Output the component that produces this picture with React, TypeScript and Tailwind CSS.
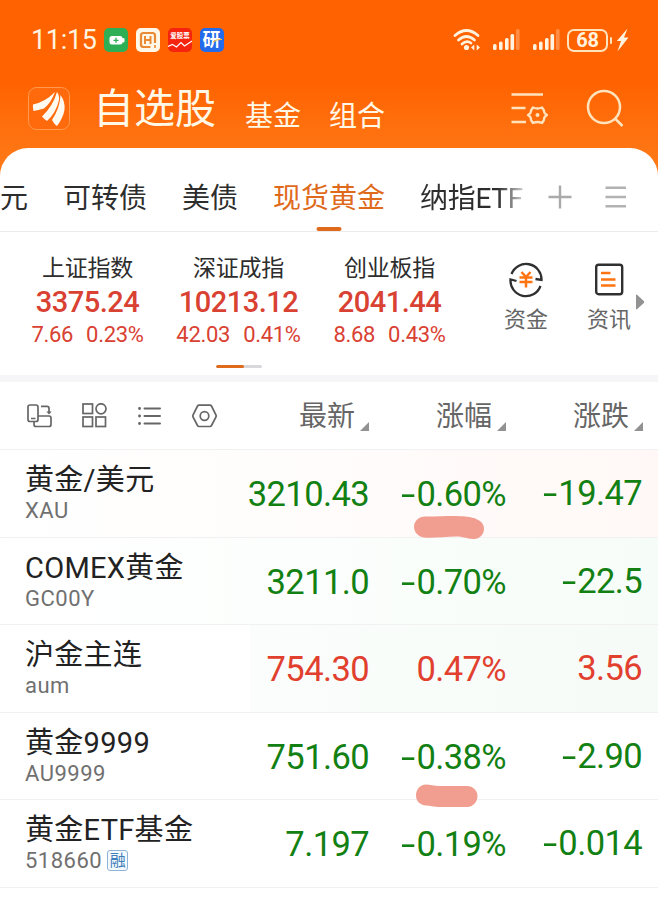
import type { ReactNode } from "react";

type IndexQuote = { name: string; value: string; change: string; percent: string };

type Quote = {
  name: string;
  code: string;
  price: string;
  percent: string;
  change: string;
  up?: boolean;
  margin?: boolean;
  background?: string;
  mark?: ReactNode;
};

const indices: IndexQuote[] = [
  { name: "上证指数", value: "3375.24", change: "7.66", percent: "0.23%" },
  { name: "深证成指", value: "10213.12", change: "42.03", percent: "0.41%" },
  { name: "创业板指", value: "2041.44", change: "8.68", percent: "0.43%" },
];

const quotes: Quote[] = [
  {
    name: "黄金/美元",
    code: "XAU",
    price: "3210.43",
    percent: "-0.60%",
    change: "-19.47",
    background: "bg-linear-to-r from-white via-[#fffcfb] to-[#fff8f6]",
    mark: (
      <svg className="absolute left-[413px] top-[65px] z-10" width="72" height="26" viewBox="0 0 72 26">
        <path
          d="M12 1.500C22 2 40 0 52 1.500C58 2.500 61 2.500 64 4.500C69 6.500 71 10 71 13.500C71 20 66 24.500 60 24C53 23.500 50 21.500 43 21.500C32 21.500 20 23.500 11 22.500C5 21.500 1 17 1 12C1 6 6 1.500 12 1.500Z"
          fill="#f19d90"
        />
      </svg>
    ),
  },
  {
    name: "COMEX黄金",
    code: "GC00Y",
    price: "3211.0",
    percent: "-0.70%",
    change: "-22.5",
    background: "bg-linear-to-r from-white via-[#fbfefc] to-[#f6fcf8]",
  },
  {
    name: "沪金主连",
    code: "aum",
    price: "754.30",
    percent: "0.47%",
    change: "3.56",
    up: true,
    background: "bg-linear-to-r from-white from-38% via-[#fafdfb] via-38% to-[#f6fbf8]",
  },
  {
    name: "黄金9999",
    code: "AU9999",
    price: "751.60",
    percent: "-0.38%",
    change: "-2.90",
    mark: (
      <svg className="absolute left-[415px] top-[71px] z-10" width="64" height="24" viewBox="0 0 64 24">
        <path
          d="M11 0.500C15 0.500 19 2 24 2H52C58 2 62.500 6.500 62.500 12C62.500 18 58 23 52 23H24C19 23 15 21.500 11 21.500C5 21 1 17 1 11.500C1 5.500 5 0.500 11 0.500Z"
          fill="#f19d90"
        />
      </svg>
    ),
  },
  {
    name: "黄金ETF基金",
    code: "518660",
    price: "7.197",
    percent: "-0.19%",
    change: "-0.014",
    margin: true,
  },
];

const Signal = () => (
  <svg width="27" height="22" viewBox="0 0 27 22" fill="#fff3df">
    <rect x="0" y="15" width="3.600" height="6" rx="1.500" />
    <rect x="6" y="12.500" width="3.600" height="8.500" rx="1.500" />
    <rect x="12" y="9" width="3.600" height="12" rx="1.500" />
    <rect x="17.500" y="5" width="3.600" height="16" rx="1.500" />
    <rect x="23" y="0" width="3.600" height="21" rx="1.500" opacity="0.3" />
  </svg>
);

const StatusBar = () => (
  <div className="flex h-20 items-center pl-[31px] pr-[29px] text-[#fff3df]">
    <span className="w-[73px] text-[27px] leading-none tracking-[-0.300px] whitespace-nowrap">11:15</span>
    <div className="flex gap-2">
      <svg width="24" height="24" viewBox="0 0 24 24">
        <rect width="24" height="24" rx="5" fill="#2eaf55" />
        <rect x="5.500" y="8" width="13" height="8.500" rx="2.500" fill="#fff" />
        <rect x="18" y="10" width="2.500" height="4.500" rx="1" fill="#fff" />
        <path d="M9.500 12.300h5M12 9.800v5" stroke="#2eaf55" strokeWidth="1.300" />
      </svg>
      <svg width="24" height="24" viewBox="0 0 24 24" fill="none">
        <rect width="24" height="24" rx="5" fill="#fff8e8" />
        <path
          d="M14.500 19H7.500Q5 19 5 16.500V7.500Q5 5 7.500 5h9Q19 5 19 7.500V15"
          stroke="#e98a35"
          strokeWidth="2.200"
        />
        <path d="M9 8v8M14.500 8v8M9 12h5.500" stroke="#e98a35" strokeWidth="2" />
        <path d="M19 17v3" stroke="#e98a35" strokeWidth="1.600" />
      </svg>
      <div className="relative h-6 w-6 rounded-[5px] bg-[#f5240f]">
        <span className="absolute inset-x-0 top-[4px] text-center text-[6.500px] leading-[8px] font-bold text-white">
          爱股票
        </span>
        <svg className="absolute inset-0" width="24" height="24" viewBox="0 0 24 24" fill="none">
          <path d="M0 18.500L4.500 16.500L8.500 19L13 14.500L16.500 18L24 13" stroke="#fff" strokeWidth="1.200" />
        </svg>
      </div>
      <div className="relative -ml-[0.500px] h-6 w-6 rounded-[5px] bg-[#236bea]">
        <span className="absolute inset-x-0 top-[4px] text-center text-[18px] leading-[16px] font-bold text-white">
          研
        </span>
        <svg className="absolute inset-0" width="24" height="24" viewBox="0 0 24 24" fill="none">
          <path d="M13 14Q17 11 22 11.500" stroke="#f2c14b" strokeWidth="1.200" />
        </svg>
      </div>
    </div>
    <div className="ml-auto flex items-center">
      <svg className="mr-[12px]" width="28" height="24" viewBox="0 0 28 24" fill="none" stroke="#fff3df" strokeWidth="2.700" strokeLinecap="round">
        <path d="M2 7.500Q13.500 -2.500 25 7.500" />
        <path d="M5.500 12Q13.500 5 21.500 12" />
        <path d="M9 16Q13.500 12 18 15" />
        <circle cx="13.500" cy="19.500" r="2.600" fill="#fff3df" stroke="none" />
        <path d="M21.300 16.500L18 19.500L21.300 22.500ZM23.700 16.500L27 19.500L23.700 22.500Z" fill="#fff3df" stroke="none" />
      </svg>
      <Signal />
      <div className="w-[13px]" />
      <Signal />
      <div className="ml-[7px] flex h-[23px] w-[41px] items-center justify-center rounded-[7px] border-2 border-[#ffe3bd] text-[20px] leading-none font-bold tracking-[-0.300px]">
        68
      </div>
      <div className="ml-[2px] h-[7px] w-[2px] rounded-full bg-[#ffe3bd]" />
      <svg className="ml-[4px]" width="13" height="24" viewBox="0 0 13 24" fill="#fff3df">
        <path d="M11.500 0.500L0.800 13H5L1.500 23.500L12.500 9.500H8Z" />
      </svg>
    </div>
  </div>
);

const TopNav = () => (
  <div className="flex h-[68px] items-start pl-[28px] pr-[34px] text-[#fff8e6]">
    <svg className="mt-[7px]" width="42" height="43" viewBox="0 0 42 43">
      <rect x="0.500" y="0.500" width="41" height="42" rx="8" fill="#ff6a0c" stroke="#ff9a4e" />
      <path d="M5 17.500Q17 15 27 5Q23 16 16 21.500Q10 23 5.500 24Q4.500 20 5 17.500Z" fill="#fffaf0" />
      <path d="M14 29.500Q25 19 29 5Q31.500 8 31 13Q28 26 19 34Q16 32 14 29.500Z" fill="#fffaf0" />
      <path d="M24 33Q32 21 32.500 8Q37.500 15 36.500 23Q35 31 29 39Q26 37 24 33Z" fill="#fffaf0" />
    </svg>
    <h1 className="ml-[23px] mt-[7px] w-[152px] text-[41px] leading-[44px] whitespace-nowrap">自选股</h1>
    <span className="mt-[19px] w-[84px] text-[28px] leading-[36px]">基金</span>
    <span className="mt-[19px] text-[28px] leading-[36px]">组合</span>
    <svg className="ml-auto mt-[12px]" width="38" height="34" viewBox="0 0 38 34" fill="none" stroke="#ffe3bd" strokeWidth="2.600">
      <path d="M0.500 2.500h31.500M0.500 16H14.500M0.500 30H15" />
      <path
        d="M22 15.500Q26.500 17.500 31 15.500L33 18.500Q32.500 21 36 23Q32.500 25 33 28L31 31Q26.500 29 22 31L20 28Q20.500 25 17 23Q20.500 21 20 18.500Z"
        strokeWidth="2.300"
        strokeLinejoin="round"
      />
      <circle cx="26.500" cy="23" r="2" fill="#ffe3bd" stroke="none" />
    </svg>
    <svg className="ml-[37px] mt-[9px]" width="38" height="38" viewBox="0 0 38 38" fill="none" stroke="#ffe3bd" strokeWidth="2.500">
      <circle cx="18" cy="18" r="16" />
      <path d="M29 29.500L36.500 37" />
    </svg>
  </div>
);

const Tabs = () => (
  <div className="flex h-[84px] items-end border-b border-[#ececec] text-[28px] text-[#2d2d2d]">
    <div className="flex h-[84px] w-[524px] shrink-0 gap-[35px] overflow-hidden whitespace-nowrap pt-[18px] leading-[68px]">
      <span>元</span>
      <span>可转债</span>
      <span>美债</span>
      <span className="relative text-[#e06a1c]">
        现货黄金
        <i className="absolute bottom-0 left-1/2 h-1 w-[25px] -translate-x-1/2 rounded-full bg-[#e06a1c]" />
      </span>
      <span className="bg-linear-to-r from-[#2d2d2d] from-75% to-[#d0d0d0] bg-clip-text tracking-[-0.300px] text-transparent">
        纳指ETF
      </span>
    </div>
    <svg className="mb-[22px] ml-[24px]" width="24" height="24" viewBox="0 0 24 24" stroke="#aaaaaa" strokeWidth="2.400">
      <path d="M0.500 12h23M12 0.500v23" />
    </svg>
    <svg className="mb-[23px] ml-[33px]" width="22" height="22" viewBox="0 0 22 22" stroke="#b2b2b2" strokeWidth="2.400">
      <path d="M0.500 1.700h20.500M0.500 11h20.500M0.500 20.300h20.500" />
    </svg>
  </div>
);

const IndexPanel = () => (
  <div className="relative flex h-[143px] pl-3">
    {indices.map((index) => (
      <div key={index.name} className="w-[151px] pt-[22px] text-center text-[#d94132]">
        <div className="text-[23px] leading-[30px] tracking-[-0.200px] text-[#2d2d2d]">{index.name}</div>
        <div className="mt-px text-[29px] leading-[34px] font-medium tracking-[-0.500px]">{index.value}</div>
        <div className="flex justify-center gap-[13px] text-[22px] leading-[31px] tracking-[-0.300px]">
          <span>{index.change}</span>
          <span>{index.percent}</span>
        </div>
      </div>
    ))}
    <div className="ml-[24px] flex w-[74px] flex-col items-center pt-[30px] text-[22px] leading-[30px] text-[#666]">
      <svg width="36" height="36" viewBox="0 0 36 36" fill="none" stroke="#303030" strokeWidth="2.300">
        <path d="M3.500 12A15.500 15.500 0 0 1 33.500 18L27.500 17" />
        <path d="M32.500 24A15.500 15.500 0 0 1 2.500 17.500L8.500 19" />
        <path d="M13.500 10L18 15L22.500 10M11.500 15.500h13M11.500 20h13M18 15v10.500" stroke="#ff7410" strokeWidth="2.500" />
      </svg>
      <span className="mt-[7px]">资金</span>
    </div>
    <div className="ml-[9px] flex w-[74px] flex-col items-center pt-[30px] text-[22px] leading-[30px] text-[#666]">
      <svg width="30" height="36" viewBox="0 0 30 36" fill="none">
        <rect x="2.200" y="2.700" width="26" height="29.500" rx="2.500" stroke="#303030" strokeWidth="2.400" />
        <path d="M7 11h9.500M7 17.500h14.500M7 23.500h14.500" stroke="#ff7410" strokeWidth="2.600" />
      </svg>
      <span className="mt-[7px]">资讯</span>
    </div>
    <svg className="absolute right-[13px] top-[62px]" width="10" height="16" viewBox="0 0 10 16">
      <path d="M1 1.500Q1 0 2.300 1L8.800 7Q9.700 8 8.800 9L2.300 15Q1 16 1 14.500Z" fill="#929292" />
    </svg>
    <div className="absolute bottom-[7px] left-[216px] h-[3px] w-[46px] overflow-hidden rounded-full bg-[#d9d9dd]">
      <div className="h-full w-[28px] rounded-full bg-[#e06a1c]" />
    </div>
  </div>
);

const SortLabel = ({ children }: { children: string }) => (
  <div className="flex w-[137px] items-end justify-end gap-[5px] text-[28px] leading-[36px] text-[#666]">
    <span className="relative top-px">{children}</span>
    <svg className="mb-[3px]" width="9" height="9" viewBox="0 0 9 9">
      <path d="M9 0V9H0Z" fill="#929292" />
    </svg>
  </div>
);

const ListHeader = () => (
  <div className="flex h-[68px] items-center border-b border-[#f1f1f1] pr-[15px]">
    <svg className="ml-[27px]" width="26" height="24" viewBox="0 0 26 24" fill="none" stroke="#666" strokeWidth="1.700">
      <path d="M7 17.500H3Q1 17.500 1 15.500V3Q1 1 3 1H9Q11 1 11 3V15.500Q11 17.500 9 17.500H7V20.500Q7 22.500 9 22.500H22Q24 22.500 24 20.500V14Q24 12 22 12H11M4 14.500h4.500M14 2.300H20Q22 2.300 22 4.300V9" />
      <path d="M19.300 7.500H24.700L22 10.500Z" fill="#666" stroke="none" />
    </svg>
    <svg className="ml-[29px]" width="25" height="25" viewBox="0 0 25 25" fill="none" stroke="#666" strokeWidth="1.700">
      <rect x="1" y="1" width="9.500" height="9.500" />
      <circle cx="19" cy="5.800" r="5" />
      <rect x="1" y="14" width="9.500" height="9.500" />
      <rect x="14" y="14" width="9.500" height="9.500" />
    </svg>
    <svg className="ml-[31px]" width="23" height="20" viewBox="0 0 23 20" fill="none" stroke="#666" strokeWidth="2" strokeLinecap="round">
      <path d="M6.500 2.500h15.500M6.500 10h15.500M6.500 17.500h15.500" />
      <path d="M1.500 2.500h0.100M1.500 10h0.100M1.500 17.500h0.100" strokeWidth="2.800" />
    </svg>
    <svg className="ml-[31px]" width="25" height="24" viewBox="0 0 25 24" fill="none" stroke="#666" strokeWidth="1.700">
      <path d="M7 1.200H18Q19 1.200 19.500 2L24 11Q24.300 12 24 13L19.500 21.500Q19 22.500 18 22.500H7Q6 22.500 5.500 21.500L1 13Q0.700 12 1 11L5.500 2Q6 1.200 7 1.200Z" />
      <circle cx="12.500" cy="12" r="4.300" />
    </svg>
    <div className="ml-auto flex">
      <SortLabel>最新</SortLabel>
      <SortLabel>涨幅</SortLabel>
      <SortLabel>涨跌</SortLabel>
    </div>
  </div>
);

// The hyphen is stretched so it reads as a minus sign at this size
const Amount = ({ value }: { value: string }) =>
  value.startsWith("-") ? (
    <>
      <span className="inline-block w-[15px] origin-left scale-x-[1.500] text-left">-</span>
      {value.slice(1)}
    </>
  ) : (
    value
  );

const QuoteRow = ({ quote }: { quote: Quote }) => (
  <div className={`relative flex h-[87.500px] border-b border-[#f1f1f1] pl-[25px] pr-4 ${quote.background ?? ""}`}>
    <div className="w-[207px] whitespace-nowrap pt-[12px]">
      <div className="text-[29px] leading-[36px] tracking-[0.300px] text-[#222]">{quote.name}</div>
      <div className="flex items-center text-[22px] leading-[25px] tracking-[0.500px] text-[#707070]">
        {quote.code}
        {quote.margin && (
          <span className="ml-[5px] flex h-[21px] w-[21px] items-center justify-center rounded-[3px] border border-[#8db4d6] bg-[#f5faff] text-[16px] leading-none tracking-normal text-[#3f80b8]">
            融
          </span>
        )}
      </div>
    </div>
    <div
      className={`flex text-right text-[34.500px] leading-[88px] tracking-[-0.600px] whitespace-nowrap ${
        quote.up ? "text-[#e2402f]" : "text-[#138013]"
      }`}
    >
      <span className="w-[137px]">{quote.price}</span>
      <span className="w-[137px]">
        <Amount value={quote.percent} />
      </span>
      <span className="w-[136px] leading-[86px]">
        <Amount value={quote.change} />
      </span>
    </div>
    {quote.mark}
  </div>
);

export default function App() {
  return (
    <div className="h-[905px] w-[658px] overflow-hidden bg-white font-['Roboto','Noto_Sans_CJK_SC',sans-serif]">
      <header className="h-[180px] bg-linear-to-b from-[#ff6200] from-45% to-[#ff7d19]">
        <StatusBar />
        <TopNav />
      </header>
      <main className="relative -mt-8 rounded-t-[28px] bg-white">
        <Tabs />
        <IndexPanel />
        <div className="h-[7px] bg-[#f6f6f8]" />
        <ListHeader />
        {quotes.map((quote) => (
          <QuoteRow key={quote.code} quote={quote} />
        ))}
      </main>
    </div>
  );
}
